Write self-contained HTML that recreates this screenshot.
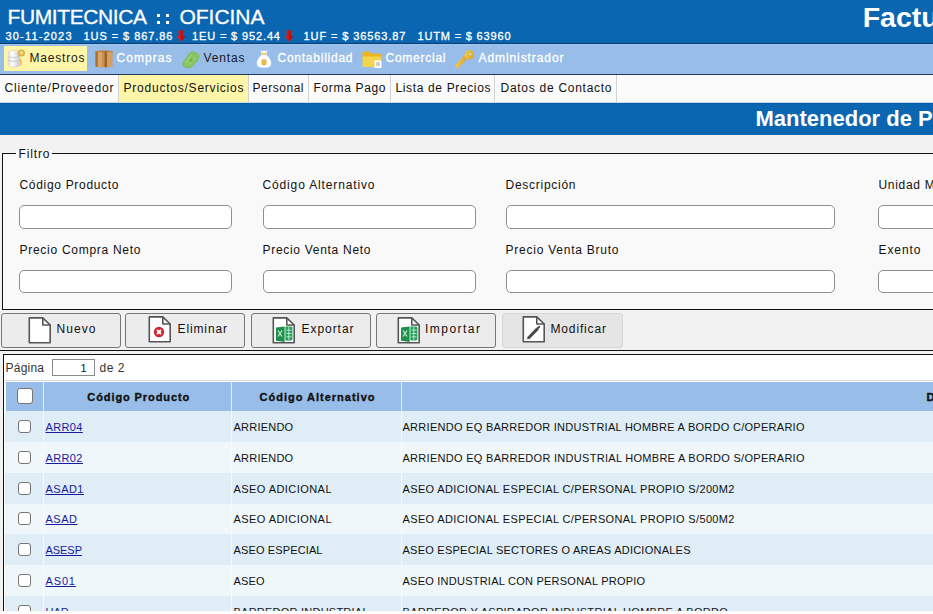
<!DOCTYPE html>
<html><head><meta charset="utf-8">
<style>
html,body{margin:0;padding:0;}
body{width:933px;height:614px;overflow:hidden;position:relative;background:#f2f2f2;font-family:"Liberation Sans", sans-serif;}
.a{position:absolute;}
.t{position:absolute;white-space:pre;line-height:1;font-family:"Liberation Sans", sans-serif;-webkit-text-stroke:0px currentColor;}
.w{-webkit-text-stroke:0.3px currentColor;}
.b{-webkit-text-stroke:0.35px currentColor;}
.inp{position:absolute;background:#fff;border:1px solid #8f8f8f;border-radius:5px;box-sizing:border-box;height:24px;}
.btn{position:absolute;top:313px;height:35px;width:120px;box-sizing:border-box;background:#ececec;border:1px solid #777;border-radius:3px;}
.sep{position:absolute;top:75px;width:1px;height:27px;background:#d2d2d2;}
.cb{position:absolute;width:13px;height:13px;box-sizing:border-box;border:1px solid #767676;border-radius:3px;background:#fff;}
</style></head><body>
<!-- header -->
<div class="a" style="left:0;top:0;width:933px;height:43px;background:#0b66b1;"></div>
<div class="a" style="left:0;top:42px;width:933px;height:1px;background:#1462a6;"></div>
<div class="a" style="left:0;top:43px;width:933px;height:1px;background:#053f7c;"></div>
<div class="a" style="left:157px;top:14px;width:3.3px;height:3.3px;background:#fff;"></div>
<div class="a" style="left:157px;top:21.2px;width:3.3px;height:3.3px;background:#fff;"></div>
<div class="a" style="left:166px;top:14px;width:3.3px;height:3.3px;background:#fff;"></div>
<div class="a" style="left:166px;top:21.2px;width:3.3px;height:3.3px;background:#fff;"></div>
<!-- arrows -->
<svg class="a" style="left:176px;top:30px" width="11" height="12" viewBox="0 0 11 12"><defs><linearGradient id="ar176" x1="0" x2="1"><stop offset="0" stop-color="#e02828"/><stop offset="0.55" stop-color="#c81010"/><stop offset="1" stop-color="#9a0808"/></linearGradient></defs><path d="M2.6 0.2 H7 V6.2 H9.6 L5 11.8 L0.6 6.2 H2.6Z" fill="url(#ar176)"/></svg>
<svg class="a" style="left:284px;top:30px" width="11" height="12" viewBox="0 0 11 12"><defs><linearGradient id="ar284" x1="0" x2="1"><stop offset="0" stop-color="#e02828"/><stop offset="0.55" stop-color="#c81010"/><stop offset="1" stop-color="#9a0808"/></linearGradient></defs><path d="M2.6 0.2 H7 V6.2 H9.6 L5 11.8 L0.6 6.2 H2.6Z" fill="url(#ar284)"/></svg>
<!-- menu bar -->
<div class="a" style="left:0;top:44px;width:933px;height:30px;background:#98bde8;"></div>
<div class="a" style="left:0;top:44px;width:933px;height:1px;background:#9ec6ef;"></div>
<div class="a" style="left:0;top:74px;width:933px;height:1px;background:#1d3d5e;"></div>
<div class="a" style="left:4px;top:46px;width:83px;height:25px;background:#fdf6a8;"></div>
<!-- submenu -->
<div class="a" style="left:0;top:75px;width:933px;height:27px;background:#fbfbfb;"></div>
<div class="a" style="left:118px;top:75px;width:130px;height:27px;background:#fdf6a8;"></div>
<div class="sep" style="left:118px"></div>
<div class="sep" style="left:248px"></div>
<div class="sep" style="left:308px"></div>
<div class="sep" style="left:390px"></div>
<div class="sep" style="left:494px"></div>
<div class="sep" style="left:616px"></div>
<!-- title bar -->
<div class="a" style="left:0;top:102px;width:933px;height:1px;background:#c9dbee;"></div>
<div class="a" style="left:0;top:103px;width:933px;height:32px;background:#0b66b1;"></div>
<div class="a" style="left:0;top:103px;width:933px;height:1px;background:#0a5ca4;"></div>
<!-- fieldset -->
<div class="a" style="left:2px;top:153px;width:940px;height:157px;box-sizing:border-box;border:1.5px solid #111;background:#f9f9f9;"></div>
<div class="a" style="left:16px;top:150px;width:36px;height:6px;background:#f9f9f9;"></div>
<div class="inp" style="left:19px;top:205px;width:213px;"></div>
<div class="inp" style="left:263px;top:205px;width:213px;"></div>
<div class="inp" style="left:506px;top:205px;width:329px;"></div>
<div class="inp" style="left:878px;top:205px;width:100px;"></div>
<div class="inp" style="left:19px;top:270px;width:213px;height:23px"></div>
<div class="inp" style="left:263px;top:270px;width:213px;height:23px"></div>
<div class="inp" style="left:506px;top:270px;width:329px;height:23px"></div>
<div class="inp" style="left:878px;top:270px;width:100px;height:23px"></div>
<!-- buttons -->
<div class="btn" style="left:1px"></div>
<div class="btn" style="left:125px"></div>
<div class="btn" style="left:251px"></div>
<div class="btn" style="left:376px"></div>
<div class="btn" style="left:502px;width:121px;background:#e5e5e5;border-color:#d6d6d6"></div>
<!-- line under buttons -->
<div class="a" style="left:0;top:350px;width:933px;height:1px;background:#111;"></div>
<!-- grid container -->
<div class="a" style="left:3px;top:354px;width:940px;height:257px;box-sizing:border-box;border-left:1px solid #111;border-top:1px solid #111;background:#fff;"></div>
<div class="a" style="left:5px;top:380px;width:930px;height:1px;background:#dadada;"></div>
<div class="a" style="left:52px;top:359px;width:43px;height:17px;box-sizing:border-box;border:1px solid #8a8a8a;background:#fff;"></div>
<!-- table header -->
<div class="a" style="left:6px;top:382px;width:930px;height:29px;background:#98bde8;"></div>
<div class="a" style="left:43px;top:382px;width:1px;height:29px;background:#e6f0fa;"></div>
<div class="a" style="left:231px;top:382px;width:1px;height:29px;background:#e6f0fa;"></div>
<div class="a" style="left:401px;top:382px;width:1px;height:29px;background:#e6f0fa;"></div>
<div class="cb" style="left:17px;top:388px;width:16px;height:16px;"></div>
<!-- rows -->
<div class="a" style="left:5px;top:411px;width:930px;height:31px;background:#deedf6;"></div>
<div class="a" style="left:43px;top:411px;width:1px;height:31px;background:#f3f9fd;"></div>
<div class="a" style="left:231px;top:411px;width:1px;height:31px;background:#f3f9fd;"></div>
<div class="a" style="left:401px;top:411px;width:1px;height:31px;background:#f3f9fd;"></div>
<div class="cb" style="left:18px;top:420px;"></div>
<div class="a" style="left:5px;top:442px;width:930px;height:30.75px;background:#eff7fb;"></div>
<div class="a" style="left:43px;top:442px;width:1px;height:30.75px;background:#f3f9fd;"></div>
<div class="a" style="left:231px;top:442px;width:1px;height:30.75px;background:#f3f9fd;"></div>
<div class="a" style="left:401px;top:442px;width:1px;height:30.75px;background:#f3f9fd;"></div>
<div class="cb" style="left:18px;top:451px;"></div>
<div class="a" style="left:5px;top:472.75px;width:930px;height:30.75px;background:#deedf6;"></div>
<div class="a" style="left:43px;top:472.75px;width:1px;height:30.75px;background:#f3f9fd;"></div>
<div class="a" style="left:231px;top:472.75px;width:1px;height:30.75px;background:#f3f9fd;"></div>
<div class="a" style="left:401px;top:472.75px;width:1px;height:30.75px;background:#f3f9fd;"></div>
<div class="cb" style="left:18px;top:482px;"></div>
<div class="a" style="left:5px;top:503.5px;width:930px;height:30.75px;background:#eff7fb;"></div>
<div class="a" style="left:43px;top:503.5px;width:1px;height:30.75px;background:#f3f9fd;"></div>
<div class="a" style="left:231px;top:503.5px;width:1px;height:30.75px;background:#f3f9fd;"></div>
<div class="a" style="left:401px;top:503.5px;width:1px;height:30.75px;background:#f3f9fd;"></div>
<div class="cb" style="left:18px;top:512px;"></div>
<div class="a" style="left:5px;top:534.25px;width:930px;height:30.75px;background:#deedf6;"></div>
<div class="a" style="left:43px;top:534.25px;width:1px;height:30.75px;background:#f3f9fd;"></div>
<div class="a" style="left:231px;top:534.25px;width:1px;height:30.75px;background:#f3f9fd;"></div>
<div class="a" style="left:401px;top:534.25px;width:1px;height:30.75px;background:#f3f9fd;"></div>
<div class="cb" style="left:18px;top:543px;"></div>
<div class="a" style="left:5px;top:565px;width:930px;height:30.75px;background:#eff7fb;"></div>
<div class="a" style="left:43px;top:565px;width:1px;height:30.75px;background:#f3f9fd;"></div>
<div class="a" style="left:231px;top:565px;width:1px;height:30.75px;background:#f3f9fd;"></div>
<div class="a" style="left:401px;top:565px;width:1px;height:30.75px;background:#f3f9fd;"></div>
<div class="cb" style="left:18px;top:574px;"></div>
<div class="a" style="left:5px;top:595.75px;width:930px;height:31.25px;background:#deedf6;"></div>
<div class="a" style="left:43px;top:595.75px;width:1px;height:31.25px;background:#f3f9fd;"></div>
<div class="a" style="left:231px;top:595.75px;width:1px;height:31.25px;background:#f3f9fd;"></div>
<div class="a" style="left:401px;top:595.75px;width:1px;height:31.25px;background:#f3f9fd;"></div>
<div class="cb" style="left:18px;top:605px;"></div>
<!-- menu icons -->
<svg class="a" style="left:6px;top:48px" width="22" height="22" viewBox="0 0 22 22">
  <defs><linearGradient id="dbg" x1="0" x2="1"><stop offset="0" stop-color="#dcdcdc"/><stop offset="0.35" stop-color="#ffffff"/><stop offset="1" stop-color="#c8c8cc"/></linearGradient></defs>
  <path d="M2.2 5 Q2.2 2.6 8 2.6 Q13.8 2.6 13.8 5 V16.5 Q13.8 19 8 19 Q2.2 19 2.2 16.5Z" fill="url(#dbg)" stroke="#d6d2b8" stroke-width="0.6"/>
  <path d="M2.4 8.6 Q8 11 13.6 8.6 M2.4 12.4 Q8 14.8 13.6 12.4" stroke="#c4c4c4" stroke-width="0.8" fill="none"/>
  <path d="M14 11 Q16 14 14.5 17.5" stroke="#f0a850" stroke-width="1.5" fill="none" opacity="0.8"/>
  <circle cx="15.4" cy="5" r="3.6" fill="#d8b040"/>
  <circle cx="15.4" cy="5" r="2.2" fill="#eacb6a"/>
  <circle cx="15.6" cy="4.4" r="0.9" fill="#fff5c0"/>
</svg>
<svg class="a" style="left:94px;top:49px" width="20" height="20" viewBox="0 0 20 20">
  <path d="M1.5 2.2 Q10 0.6 18.5 2.2 V17.6 Q10 19.4 1.5 17.6Z" fill="#c99252"/>
  <path d="M1.5 2.2 Q10 0.6 18.5 2.2 V4.2 Q10 2.8 1.5 4.2Z" fill="#b88040"/>
  <rect x="1.5" y="3" width="2.2" height="14.8" fill="#a86e34"/>
  <rect x="4" y="3" width="4" height="15" fill="#d8a468"/>
  <rect x="10.6" y="2.6" width="2.4" height="15.6" fill="#9a6430"/>
  <rect x="13.2" y="3" width="4.6" height="15" fill="#d6a064"/>
</svg>
<svg class="a" style="left:181px;top:50px" width="20" height="19" viewBox="0 0 20 19">
  <path d="M2 12.5 L8.5 3.5 Q10 1.5 12.5 2 L16.5 3.5 Q18.5 4.8 17.8 7.5 L16.5 10.5 L11.5 16 Q9 18.2 6 17.6 L3 16.4 Q1 15 2 12.5Z" fill="#86c562" stroke="#7cbc58" stroke-width="1" stroke-linejoin="round"/>
  <path d="M4.5 13 L10.5 5.2 M8 15 L14 7.5" stroke="#9ad478" stroke-width="1.3" fill="none"/>
  <circle cx="10.2" cy="10" r="1.8" fill="#70b04c"/>
</svg>
<svg class="a" style="left:255px;top:49px" width="18" height="20" viewBox="0 0 18 20">
  <path d="M5.5 1 L7.5 2.6 L9 1.2 L10.5 2.6 L12.5 1 L11.5 5 H6.5Z" fill="#fff"/>
  <rect x="6.4" y="3.6" width="5.2" height="2.6" fill="#f2d27a"/>
  <path d="M6.5 6 Q1.5 10 1.8 15 Q2 18.8 9 18.8 Q16 18.8 16.2 15 Q16.5 10 11.5 6Z" fill="#fdfdfd"/>
  <ellipse cx="9" cy="13.2" rx="2.6" ry="3.3" fill="#e6b43a"/>
  <path d="M9 11 V15.5" stroke="#f6d88a" stroke-width="0.8"/>
</svg>
<svg class="a" style="left:361px;top:49px" width="22" height="20" viewBox="0 0 22 20">
  <path d="M1.5 4 Q1.5 2.5 3 2.5 H8.5 L10.5 4.5 H19 Q20 4.5 20 5.5 V8 H1.5Z" fill="#eeb420"/>
  <rect x="1.5" y="7.5" width="18.5" height="10.5" rx="0.8" fill="#f2d44e"/>
  <rect x="13.5" y="11.5" width="7" height="7.5" fill="#fff"/>
  <rect x="15.2" y="13.2" width="3.6" height="4" fill="#c8cbb8"/>
</svg>
<svg class="a" style="left:455px;top:49px" width="21" height="20" viewBox="0 0 21 20">
  <defs><linearGradient id="kg" x1="0" x2="1" y1="0" y2="0.3"><stop offset="0" stop-color="#f2cc48"/><stop offset="1" stop-color="#d9a932"/></linearGradient></defs>
  <path d="M2.6 16.8 L10.5 8.2" stroke="url(#kg)" stroke-width="4.4" stroke-linecap="round"/>
  <circle cx="14.4" cy="5.8" r="4.8" fill="url(#kg)"/>
  <circle cx="15.2" cy="5.2" r="1.4" fill="#d5cfa8"/>
</svg>
<!-- arrow down -->
<!-- button icons -->
<svg class="a" style="left:27px;top:316px" width="26" height="30" viewBox="0 0 26 30">
  <path d="M2.3 1.9 H15.8 L23.2 9 V26.8 H2.3Z" fill="#fff" stroke="#555" stroke-width="1.6" stroke-linejoin="round"/>
  <path d="M15.8 1.9 V9 H23.2" fill="none" stroke="#555" stroke-width="1.6" stroke-linejoin="round"/>
</svg>
<svg class="a" style="left:147px;top:315px" width="26" height="30" viewBox="0 0 26 30">
  <path d="M2.3 1.9 H15.8 L23.2 9 V26.8 H2.3Z" fill="#fff" stroke="#555" stroke-width="1.6" stroke-linejoin="round"/>
  <path d="M15.8 1.9 V9 H23.2" fill="none" stroke="#555" stroke-width="1.6" stroke-linejoin="round"/>
  <circle cx="12" cy="17" r="5.2" fill="#d22630"/>
  <path d="M10 15 L14 19 M14 15 L10 19" stroke="#fff" stroke-width="1.9"/>
</svg>
<svg class="a" style="left:271px;top:316px" width="26" height="30" viewBox="0 0 26 30">
  <path d="M2.3 1.9 H15.8 L23.2 9 V26.8 H2.3Z" fill="#fff" stroke="#555" stroke-width="1.6" stroke-linejoin="round"/>
  <path d="M15.8 1.9 V9 H23.2" fill="none" stroke="#555" stroke-width="1.6" stroke-linejoin="round"/>
  <path d="M5 11.5 L13.6 10.4 V26 L5 24.8Z" fill="#1f8f4e"/>
  <path d="M14.4 10.6 H20 Q21.4 10.6 21.4 12 V23 Q21.4 24.4 20 24.4 H14.4Z" fill="#21a05a"/>
  <path d="M7 14.5 L11 20.5 M11 14.5 L7 20.5" stroke="#bfe8cc" stroke-width="1.3"/>
  <path d="M15.5 14.2 H20.5 M15.5 17.5 H20.5 M15.5 20.8 H20.5 M17.8 11 V24" stroke="#c8ecd4" stroke-width="0.9"/>
</svg>
<svg class="a" style="left:396px;top:316px" width="26" height="30" viewBox="0 0 26 30">
  <path d="M2.3 1.9 H15.8 L23.2 9 V26.8 H2.3Z" fill="#fff" stroke="#555" stroke-width="1.6" stroke-linejoin="round"/>
  <path d="M15.8 1.9 V9 H23.2" fill="none" stroke="#555" stroke-width="1.6" stroke-linejoin="round"/>
  <path d="M5 11.5 L13.6 10.4 V26 L5 24.8Z" fill="#1f8f4e"/>
  <path d="M14.4 10.6 H20 Q21.4 10.6 21.4 12 V23 Q21.4 24.4 20 24.4 H14.4Z" fill="#21a05a"/>
  <path d="M7 14.5 L11 20.5 M11 14.5 L7 20.5" stroke="#bfe8cc" stroke-width="1.3"/>
  <path d="M15.5 14.2 H20.5 M15.5 17.5 H20.5 M15.5 20.8 H20.5 M17.8 11 V24" stroke="#c8ecd4" stroke-width="0.9"/>
</svg>
<svg class="a" style="left:521px;top:315px" width="26" height="30" viewBox="0 0 26 30">
  <path d="M2.3 1.9 H15.8 L23.2 9 V26.8 H2.3Z" fill="#fff" stroke="#555" stroke-width="1.6" stroke-linejoin="round"/>
  <path d="M15.8 1.9 V9 H23.2" fill="none" stroke="#555" stroke-width="1.6" stroke-linejoin="round"/>
  <path d="M7 23.5 L16.6 13.6" stroke="#4a4a4a" stroke-width="3" stroke-linecap="butt"/>
  <path d="M15.8 12.8 L17.6 11 Q18.6 10.4 19 11.4 Q19.4 12.2 18.6 12.8 L17 14.6Z" fill="#444"/>
  <path d="M7.6 22.9 L5.6 25.2 L6.3 22.2Z" fill="#777"/>
</svg>

<div class="t w" style="left:7.50px;top:6.42px;font-size:21px;font-weight:400;color:#fff;letter-spacing:-0.390px;">FUMITECNICA</div>
<div class="t w" style="left:179.50px;top:6.42px;font-size:21px;font-weight:400;color:#fff;letter-spacing:-0.029px;">OFICINA</div>
<div class="t w" style="left:5.50px;top:30.69px;font-size:11px;font-weight:400;color:#fff;letter-spacing:1.172px;">30-11-2023</div>
<div class="t w" style="left:83.50px;top:30.69px;font-size:11px;font-weight:400;color:#fff;letter-spacing:0.941px;">1US = $ 867.86</div>
<div class="t w" style="left:192.00px;top:30.69px;font-size:11px;font-weight:400;color:#fff;letter-spacing:0.864px;">1EU = $ 952.44</div>
<div class="t w" style="left:303.50px;top:30.69px;font-size:11px;font-weight:400;color:#fff;letter-spacing:0.908px;">1UF = $ 36563.87</div>
<div class="t w" style="left:417.50px;top:30.69px;font-size:11px;font-weight:400;color:#fff;letter-spacing:0.827px;">1UTM = $ 63960</div>
<div class="t" style="left:862.70px;top:3.47px;font-size:28.5px;font-weight:700;color:#fff;letter-spacing:0.000px;">Factu</div>
<div class="t" style="left:29.50px;top:51.84px;font-size:12px;font-weight:400;color:#1a1a1a;letter-spacing:0.806px;">Maestros</div>
<div class="t w" style="left:116.50px;top:51.84px;font-size:12px;font-weight:400;color:#fff;letter-spacing:1.052px;">Compras</div>
<div class="t" style="left:203.50px;top:51.84px;font-size:12px;font-weight:400;color:#1a1a2a;letter-spacing:0.859px;">Ventas</div>
<div class="t w" style="left:277.50px;top:51.84px;font-size:12px;font-weight:400;color:#fff;letter-spacing:0.753px;">Contabilidad</div>
<div class="t w" style="left:385.50px;top:51.84px;font-size:12px;font-weight:400;color:#fff;letter-spacing:0.748px;">Comercial</div>
<div class="t w" style="left:478.50px;top:51.84px;font-size:12px;font-weight:400;color:#fff;letter-spacing:0.914px;">Administrador</div>
<div class="t" style="left:4.50px;top:81.84px;font-size:12px;font-weight:400;color:#111;letter-spacing:0.809px;">Cliente/Proveedor</div>
<div class="t" style="left:123.50px;top:81.84px;font-size:12px;font-weight:400;color:#111;letter-spacing:0.775px;">Productos/Servicios</div>
<div class="t" style="left:252.50px;top:81.84px;font-size:12px;font-weight:400;color:#111;letter-spacing:0.518px;">Personal</div>
<div class="t" style="left:313.50px;top:81.84px;font-size:12px;font-weight:400;color:#111;letter-spacing:0.663px;">Forma Pago</div>
<div class="t" style="left:395.50px;top:81.84px;font-size:12px;font-weight:400;color:#111;letter-spacing:0.641px;">Lista de Precios</div>
<div class="t" style="left:500.50px;top:81.84px;font-size:12px;font-weight:400;color:#111;letter-spacing:0.725px;">Datos de Contacto</div>
<div class="t" style="left:755.50px;top:107.98px;font-size:22px;font-weight:700;color:#fff;letter-spacing:0.000px;">Mantenedor de Productos</div>
<div class="t" style="left:18.50px;top:147.84px;font-size:12px;font-weight:400;color:#111;letter-spacing:0.866px;">Filtro</div>
<div class="t" style="left:19.50px;top:178.84px;font-size:12px;font-weight:400;color:#111;letter-spacing:0.686px;">Código Producto</div>
<div class="t" style="left:262.50px;top:178.84px;font-size:12px;font-weight:400;color:#111;letter-spacing:0.858px;">Código Alternativo</div>
<div class="t" style="left:505.50px;top:178.84px;font-size:12px;font-weight:400;color:#111;letter-spacing:0.730px;">Descripción</div>
<div class="t" style="left:878.50px;top:178.84px;font-size:12px;font-weight:400;color:#111;letter-spacing:0.690px;">Unidad Medida</div>
<div class="t" style="left:19.50px;top:243.84px;font-size:12px;font-weight:400;color:#111;letter-spacing:0.722px;">Precio Compra Neto</div>
<div class="t" style="left:262.50px;top:243.84px;font-size:12px;font-weight:400;color:#111;letter-spacing:0.704px;">Precio Venta Neto</div>
<div class="t" style="left:505.50px;top:243.84px;font-size:12px;font-weight:400;color:#111;letter-spacing:0.761px;">Precio Venta Bruto</div>
<div class="t" style="left:878.50px;top:243.84px;font-size:12px;font-weight:400;color:#111;letter-spacing:0.928px;">Exento</div>
<div class="t" style="left:56.50px;top:322.84px;font-size:12px;font-weight:400;color:#111;letter-spacing:1.078px;">Nuevo</div>
<div class="t" style="left:177.50px;top:322.84px;font-size:12px;font-weight:400;color:#111;letter-spacing:0.879px;">Eliminar</div>
<div class="t" style="left:301.50px;top:322.84px;font-size:12px;font-weight:400;color:#111;letter-spacing:0.949px;">Exportar</div>
<div class="t" style="left:425.00px;top:322.84px;font-size:12px;font-weight:400;color:#111;letter-spacing:1.473px;">Importar</div>
<div class="t" style="left:550.50px;top:322.84px;font-size:12px;font-weight:400;color:#111;letter-spacing:0.852px;">Modificar</div>
<div class="t" style="left:5.50px;top:361.84px;font-size:12px;font-weight:400;color:#333;letter-spacing:0.225px;">Página</div>
<div class="t" style="left:99.50px;top:361.84px;font-size:12px;font-weight:400;color:#333;letter-spacing:0.547px;">de 2</div>
<div class="t" style="left:80.50px;top:362.69px;font-size:11px;font-weight:400;color:#111;letter-spacing:0.000px;">1</div>
<div class="t b" style="left:87.30px;top:391.69px;font-size:11px;font-weight:700;color:#111;letter-spacing:0.913px;">Código Producto</div>
<div class="t b" style="left:259.50px;top:391.69px;font-size:11px;font-weight:700;color:#111;letter-spacing:1.001px;">Código Alternativo</div>
<div class="t b" style="left:926.50px;top:391.69px;font-size:11px;font-weight:700;color:#111;letter-spacing:0.000px;">Descripción</div>
<div class="t" style="left:45.50px;top:421.69px;font-size:11px;font-weight:400;color:#1a1aa0;letter-spacing:0.383px;text-decoration:underline;">ARR04</div>
<div class="t" style="left:233.50px;top:421.69px;font-size:11px;font-weight:400;color:#111;letter-spacing:0.220px;">ARRIENDO</div>
<div class="t" style="left:402.50px;top:421.69px;font-size:11px;font-weight:400;color:#111;letter-spacing:0.277px;">ARRIENDO EQ BARREDOR INDUSTRIAL HOMBRE A BORDO C/OPERARIO</div>
<div class="t" style="left:45.50px;top:452.69px;font-size:11px;font-weight:400;color:#1a1aa0;letter-spacing:0.383px;text-decoration:underline;">ARR02</div>
<div class="t" style="left:233.50px;top:452.69px;font-size:11px;font-weight:400;color:#111;letter-spacing:0.220px;">ARRIENDO</div>
<div class="t" style="left:402.50px;top:452.69px;font-size:11px;font-weight:400;color:#111;letter-spacing:0.288px;">ARRIENDO EQ BARREDOR INDUSTRIAL HOMBRE A BORDO S/OPERARIO</div>
<div class="t" style="left:45.50px;top:483.69px;font-size:11px;font-weight:400;color:#1a1aa0;letter-spacing:0.480px;text-decoration:underline;">ASAD1</div>
<div class="t" style="left:233.50px;top:483.69px;font-size:11px;font-weight:400;color:#111;letter-spacing:0.438px;">ASEO ADICIONAL</div>
<div class="t" style="left:402.50px;top:483.69px;font-size:11px;font-weight:400;color:#111;letter-spacing:0.357px;">ASEO ADICIONAL ESPECIAL C/PERSONAL PROPIO S/200M2</div>
<div class="t" style="left:45.50px;top:513.69px;font-size:11px;font-weight:400;color:#1a1aa0;letter-spacing:0.510px;text-decoration:underline;">ASAD</div>
<div class="t" style="left:233.50px;top:513.69px;font-size:11px;font-weight:400;color:#111;letter-spacing:0.438px;">ASEO ADICIONAL</div>
<div class="t" style="left:402.50px;top:513.69px;font-size:11px;font-weight:400;color:#111;letter-spacing:0.357px;">ASEO ADICIONAL ESPECIAL C/PERSONAL PROPIO S/500M2</div>
<div class="t" style="left:45.50px;top:544.69px;font-size:11px;font-weight:400;color:#1a1aa0;letter-spacing:-0.047px;text-decoration:underline;">ASESP</div>
<div class="t" style="left:233.50px;top:544.69px;font-size:11px;font-weight:400;color:#111;letter-spacing:0.130px;">ASEO ESPECIAL</div>
<div class="t" style="left:402.50px;top:544.69px;font-size:11px;font-weight:400;color:#111;letter-spacing:0.240px;">ASEO ESPECIAL SECTORES O AREAS ADICIONALES</div>
<div class="t" style="left:45.50px;top:575.69px;font-size:11px;font-weight:400;color:#1a1aa0;letter-spacing:0.859px;text-decoration:underline;">AS01</div>
<div class="t" style="left:233.50px;top:575.69px;font-size:11px;font-weight:400;color:#111;letter-spacing:0.141px;">ASEO</div>
<div class="t" style="left:402.50px;top:575.69px;font-size:11px;font-weight:400;color:#111;letter-spacing:0.238px;">ASEO INDUSTRIAL CON PERSONAL PROPIO</div>
<div class="t" style="left:45.50px;top:606.69px;font-size:11px;font-weight:400;color:#1a1aa0;letter-spacing:0.000px;text-decoration:underline;">HAR</div>
<div class="t" style="left:233.50px;top:606.69px;font-size:11px;font-weight:400;color:#111;letter-spacing:0.234px;">BARREDOR INDUSTRIAL</div>
<div class="t" style="left:402.50px;top:606.69px;font-size:11px;font-weight:400;color:#111;letter-spacing:0.308px;">BARREDOR Y ASPIRADOR INDUSTRIAL HOMBRE A BORDO</div>
<div class="a" style="left:0;top:611px;width:933px;height:3px;background:#fcfcfc;"></div>
</body></html>
